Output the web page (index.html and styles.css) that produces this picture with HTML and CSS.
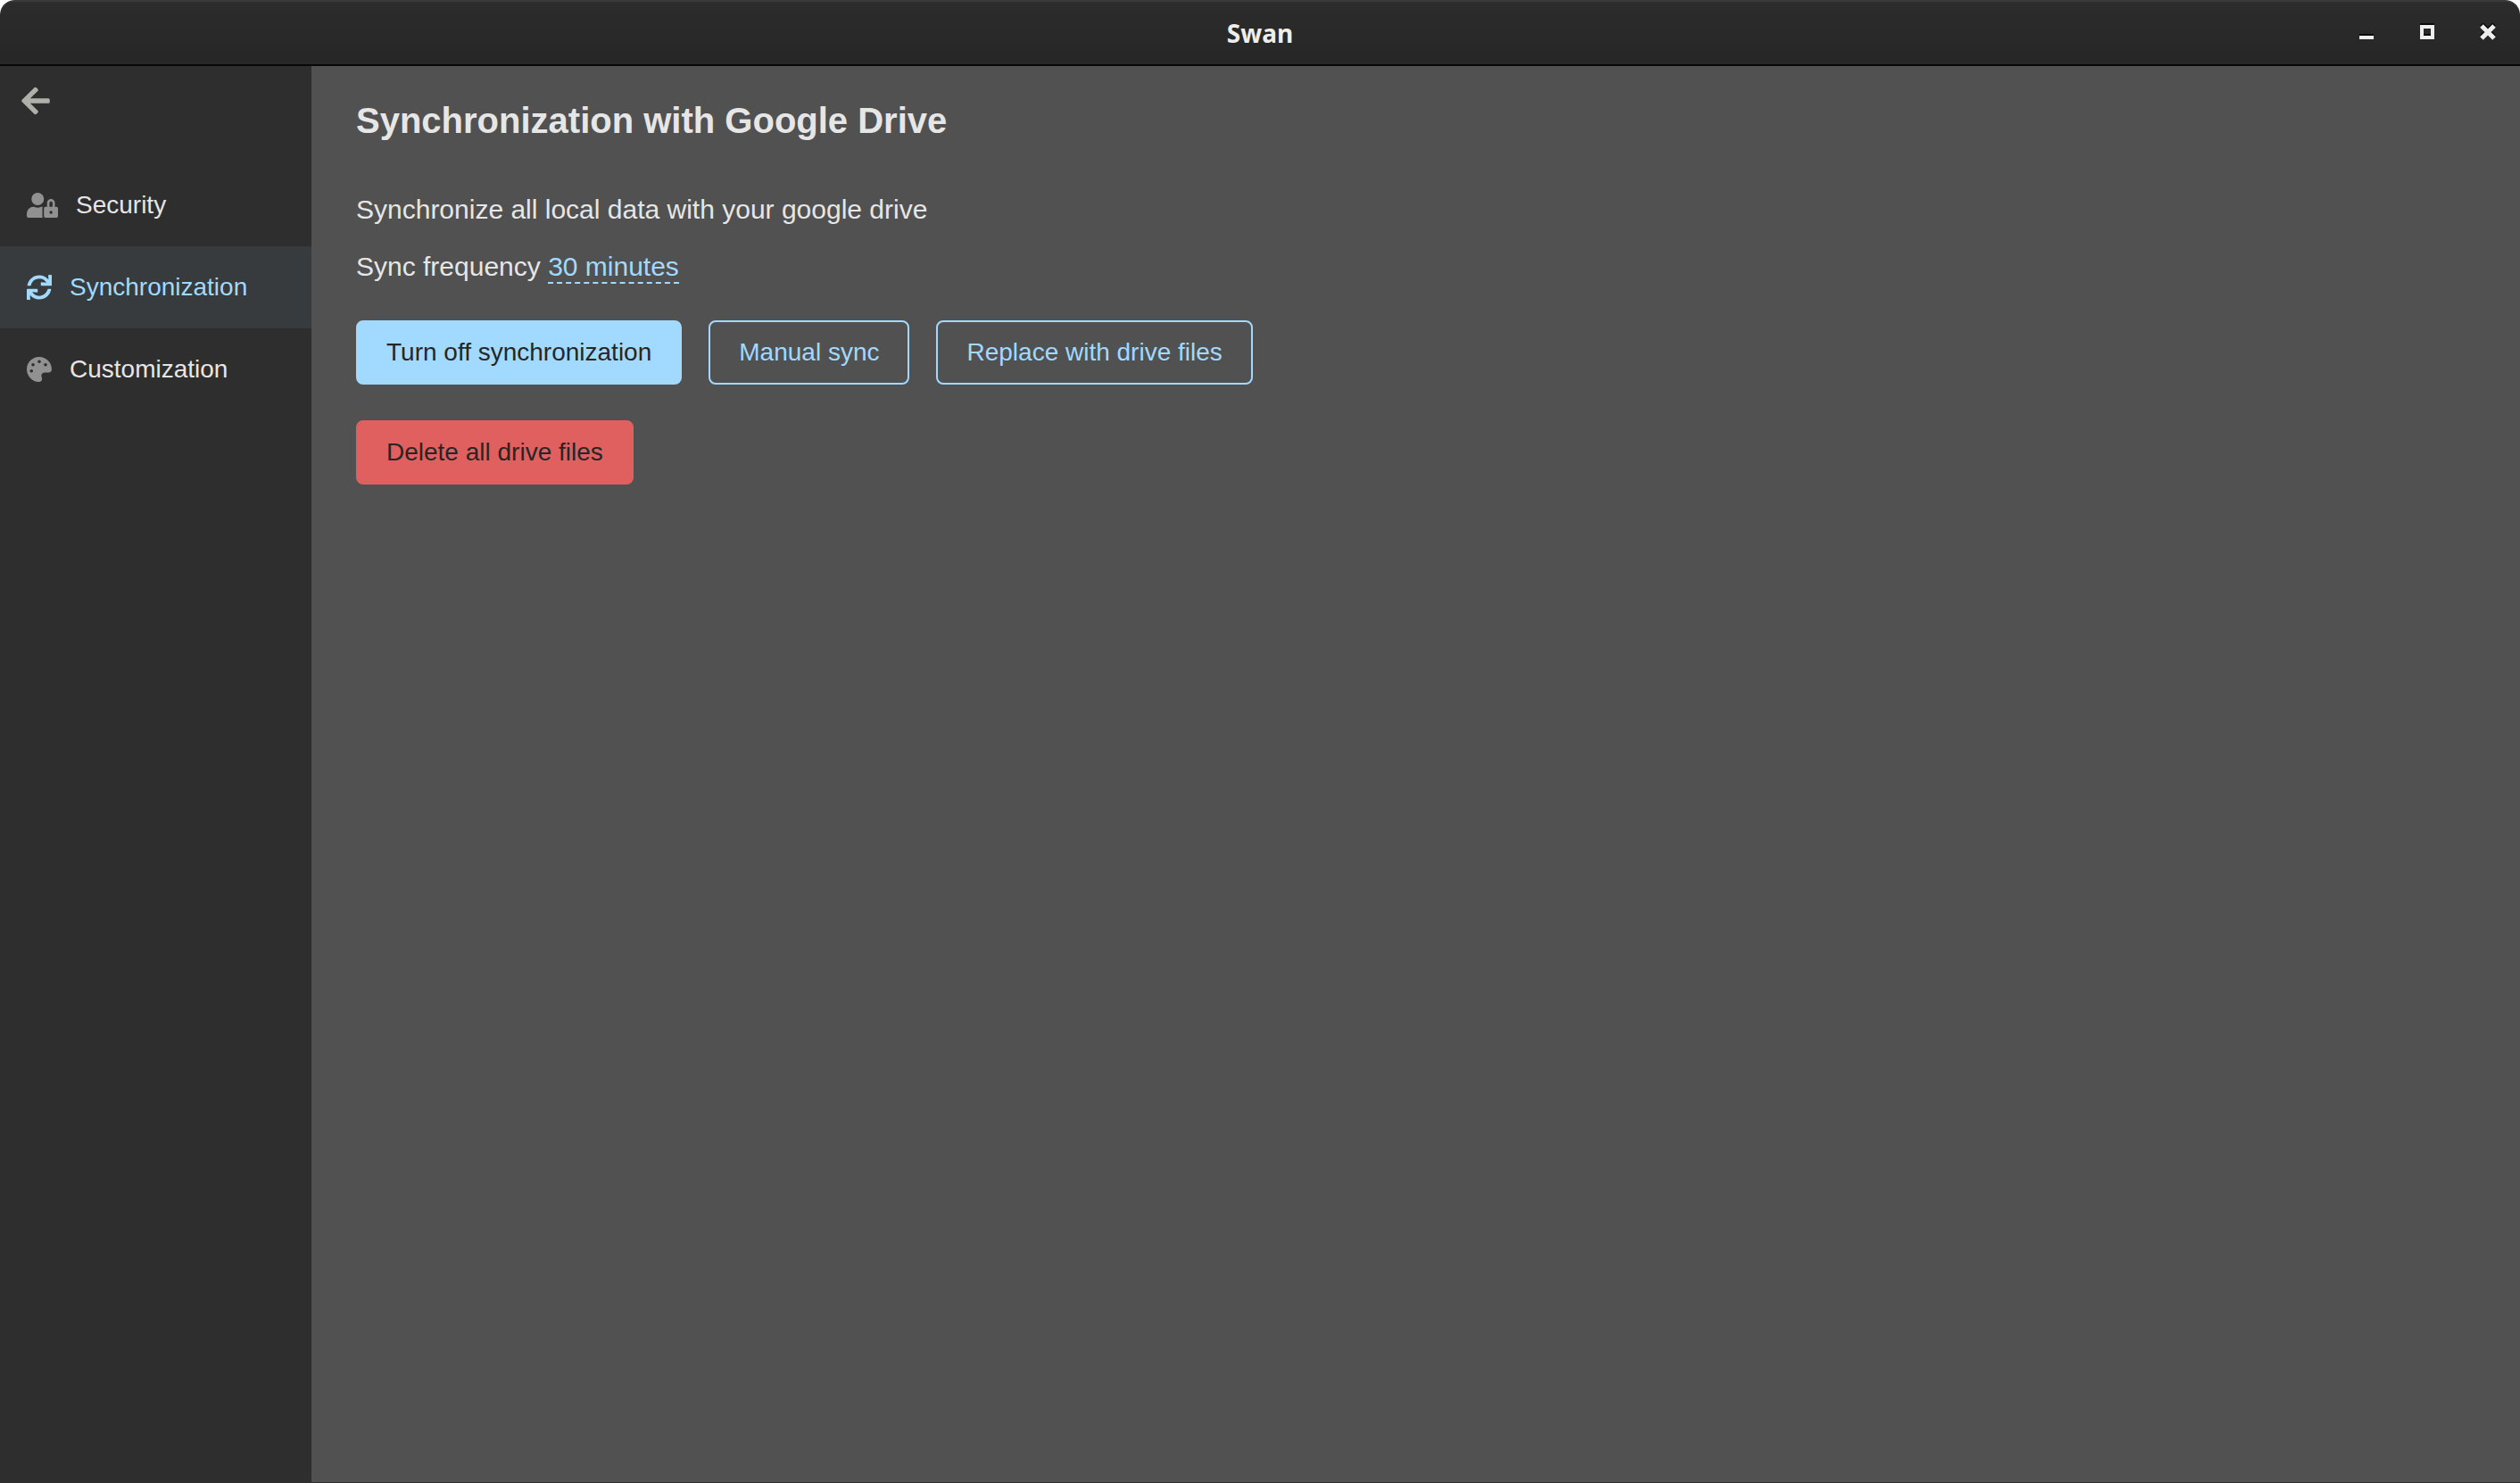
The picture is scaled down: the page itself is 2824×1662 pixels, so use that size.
FILE: index.html
```html
<!DOCTYPE html>
<html lang="en">
<head>
<meta charset="utf-8">
<title>Swan</title>
<link rel="stylesheet" href="styles.css">
</head>
<body>
<div class="window">
  <header class="titlebar">
    <span class="titlebar-title">Swan</span>
    <div class="window-controls">
      <button class="window-control" type="button" aria-label="Minimize">
        <svg class="control-icon" viewBox="0 0 20 20"><path fill="#0a0a0a" d="M2 12h16v2H2z"/><path fill="#eeeeec" d="M2 14h16v4H2z"/></svg>
      </button>
      <button class="window-control" type="button" aria-label="Maximize">
        <svg class="control-icon" viewBox="0 0 20 20"><path fill="#0a0a0a" d="M2 0h16v2H2zM6 12h8v2H6z"/><path fill="#eeeeec" fill-rule="evenodd" d="M2 2h16v16H2zM6 6v8h8V6z"/></svg>
      </button>
      <button class="window-control" type="button" aria-label="Close">
        <svg class="control-icon" viewBox="0 0 20 20"><path stroke="#0a0a0a" stroke-width="5" d="M3 1l14 14M17 1L3 15"/><path stroke="#eeeeec" stroke-width="5" d="M3 3l14 14M17 3L3 17"/></svg>
      </button>
    </div>
  </header>
  <div class="layout">
    <aside class="sidebar">
      <button class="back" type="button" aria-label="Back">
        <svg class="back-icon" viewBox="0 0 448 512"><path d="M257.5 445.1l-22.2 22.2c-9.4 9.4-24.6 9.4-33.9 0L7 273c-9.4-9.4-9.4-24.6 0-33.9L201.4 44.7c9.4-9.4 24.6-9.4 33.9 0l22.2 22.2c9.5 9.5 9.3 25-.4 34.3L136.6 216H424c13.3 0 24 10.7 24 24v32c0 13.3-10.7 24-24 24H136.6l120.5 114.8c9.8 9.3 10 24.8.4 34.3z"/></svg>
      </button>
      <nav class="menu">
        <a class="menu-item" href="#security">
          <svg class="menu-icon menu-icon-wide" viewBox="0 0 640 512"><path d="M224 256A128 128 0 1 0 96 128a128 128 0 0 0 128 128zm96 64a63.08 63.08 0 0 1 8.1-30.5c-4.8-.5-9.5-1.5-14.5-1.5h-16.7a174.08 174.08 0 0 1-145.8 0h-16.7A134.43 134.43 0 0 0 0 422.4V464a48 48 0 0 0 48 48h280.9a63.54 63.54 0 0 1-8.9-32zm288-32h-32v-80a80 80 0 0 0-160 0v80h-32a32 32 0 0 0-32 32v160a32 32 0 0 0 32 32h224a32 32 0 0 0 32-32V320a32 32 0 0 0-32-32zM496 432a32 32 0 1 1 32-32 32 32 0 0 1-32 32zm32-144h-64v-80a32 32 0 0 1 64 0z"/></svg>
          <span>Security</span>
        </a>
        <a class="menu-item menu-item-active" href="#synchronization">
          <svg class="menu-icon" viewBox="0 0 512 512"><path d="M440.65 12.57l4 82.77A247.16 247.16 0 0 0 255.83 8C134.73 8 33.91 94.92 12.29 209.82A12 12 0 0 0 24.09 224h49.05a12 12 0 0 0 11.67-9.26 175.91 175.91 0 0 1 317-56.94l-101.46-4.86a12 12 0 0 0-12.57 12v47.41a12 12 0 0 0 12 12H500a12 12 0 0 0 12-12V12a12 12 0 0 0-12-12h-47.37a12 12 0 0 0-11.98 12.57zM255.83 432a175.61 175.61 0 0 1-146-77.8l101.8 4.87a12 12 0 0 0 12.57-12v-47.4a12 12 0 0 0-12-12H12a12 12 0 0 0-12 12V500a12 12 0 0 0 12 12h47.35a12 12 0 0 0 12-12.6l-4.15-82.57A247.17 247.17 0 0 0 255.83 504c121.11 0 221.93-86.92 243.55-201.82a12 12 0 0 0-11.8-14.18h-49.05a12 12 0 0 0-11.67 9.26A175.86 175.86 0 0 1 255.83 432z"/></svg>
          <span>Synchronization</span>
        </a>
        <a class="menu-item" href="#customization">
          <svg class="menu-icon" viewBox="0 0 512 512"><path d="M204.3 5C104.9 24.4 24.8 104.3 5.2 203.4c-37 187 131.7 326.4 258.8 306.7 41.2-6.4 61.4-54.6 42.5-91.7-23.1-45.4 9.9-98.4 60.9-98.4h79.7c35.8 0 64.8-29.6 64.9-65.3C511.5 97.1 368.1-26.9 204.3 5zM96 320c-17.7 0-32-14.3-32-32s14.3-32 32-32 32 14.3 32 32-14.3 32-32 32zm32-128c-17.7 0-32-14.3-32-32s14.3-32 32-32 32 14.3 32 32-14.3 32-32 32zm128-64c-17.7 0-32-14.3-32-32s14.3-32 32-32 32 14.3 32 32-14.3 32-32 32zm128 64c-17.7 0-32-14.3-32-32s14.3-32 32-32 32 14.3 32 32-14.3 32-32 32z"/></svg>
          <span>Customization</span>
        </a>
      </nav>
    </aside>
    <main class="content">
      <h1 class="heading">Synchronization with Google Drive</h1>
      <p class="text">Synchronize all local data with your google drive</p>
      <p class="text">Sync frequency <a class="frequency" href="#frequency">30 minutes</a></p>
      <div class="action-groups">
        <div class="actions">
          <button class="button button-primary" type="button">Turn off synchronization</button>
          <button class="button" type="button">Manual sync</button>
          <button class="button" type="button">Replace with drive files</button>
        </div>
        <div class="actions">
          <button class="button button-danger" type="button">Delete all drive files</button>
        </div>
      </div>
    </main>
  </div>
</div>
</body>
</html>
```

FILE: styles.css
```css
* {
  box-sizing: border-box;
}

body {
  margin: 0;
  background: #ffffff;
  color: #e6e6e6;
  font-family: "Liberation Sans", Arial, sans-serif;
  font-size: 28px;
}

button {
  margin: 0;
  padding: 0;
  border: 0;
  background: none;
  color: inherit;
  font: inherit;
  cursor: pointer;
}

.window {
  display: flex;
  flex-direction: column;
  min-height: 100vh;
  overflow: hidden;
  border-radius: 16px 16px 0 0;
  border-bottom: 1px solid #332b30;
}

.titlebar {
  display: grid;
  grid-template-columns: 1fr auto 1fr;
  align-items: center;
  height: 74px;
  border-top: 2px solid #3a3a3a;
  border-bottom: 2px solid #070707;
  border-radius: 16px 16px 0 0;
  background: linear-gradient(#2c2c2c, #262626);
}

.titlebar-title {
  grid-column: 2;
  color: #eeeeec;
  font-family: "Noto Sans", sans-serif;
  font-weight: 700;
  line-height: 38px;
}

.window-controls {
  display: flex;
  align-self: start;
  justify-content: flex-end;
  padding-right: 2px;
}

.window-control {
  display: flex;
  align-items: center;
  justify-content: center;
  width: 68px;
  height: 68px;
}

.control-icon {
  width: 20px;
  height: 20px;
  fill: none;
}

.layout {
  display: flex;
  flex: 1;
}

.sidebar {
  flex: none;
  width: 349px;
  background: #2e2e2e;
}

.back {
  display: flex;
  align-items: center;
  height: 78px;
  padding: 0 24px;
}

.back-icon {
  width: 32px;
  height: 36px;
  fill: #b0b0aa;
}

.menu {
  display: flex;
  flex-direction: column;
  padding-top: 32px;
}

.menu-item {
  display: flex;
  align-items: center;
  gap: 20px;
  height: 92px;
  padding: 0 30px;
  color: #e6e6e6;
  text-decoration: none;
}

.menu-item-active {
  background: #373b3e;
  color: #a1d9ff;
}

.menu-icon {
  width: 28px;
  height: 28px;
  fill: #919191;
}

.menu-icon-wide {
  width: 35px;
}

.menu-item-active .menu-icon {
  fill: #a1d9ff;
}

.content {
  flex: 1;
  padding: 38px 50px;
  background: #515151;
}

.heading {
  margin: 0 0 59px;
  font-size: 40px;
  font-weight: 700;
  line-height: 46px;
}

.text {
  margin: 0 0 28px;
  font-size: 30px;
  line-height: 36px;
}

.frequency {
  padding-bottom: 1px;
  border-bottom: 2px dashed #a1d9ff;
  color: #a1d9ff;
  text-decoration: none;
}

.action-groups {
  display: flex;
  flex-direction: column;
  gap: 40px;
  margin-top: 42px;
}

.actions {
  display: flex;
  flex-wrap: wrap;
  gap: 30px;
}

.button {
  height: 72px;
  padding: 0 32px;
  border: 2px solid #a1d9ff;
  border-radius: 8px;
  color: #a1d9ff;
}

.button-primary {
  background: #a1d9ff;
  color: #262626;
}

.button-danger {
  border-color: #e06060;
  background: #e06060;
  color: #262626;
}
```
